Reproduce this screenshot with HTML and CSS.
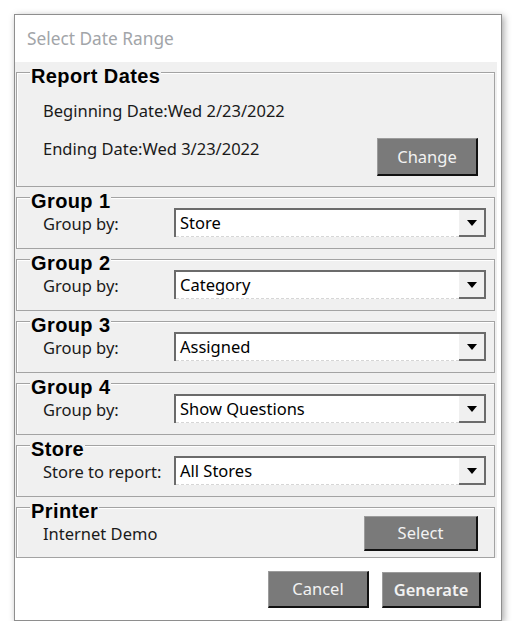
FILE: index.html
```html
<!DOCTYPE html>
<html>
<head>
<meta charset="utf-8">
<title>Select Date Range</title>
<link rel="stylesheet" href="styles.css">
</head>
<body>
<div class="window">
  <div class="titlebar">Select Date Range</div>
  <div class="panel">
    <div class="box box-report">
      <div class="legend">Report Dates</div>
      <div class="date-row">Beginning Date:Wed 2/23/2022</div>
      <div class="date-row date-row-end">
        <span>Ending Date:Wed 3/23/2022</span>
        <button class="btn btn-change">Change</button>
      </div>
    </div>

    <div class="box box-group">
      <div class="legend legend-tight">Group 1</div>
      <div class="field">
        <span class="field-label">Group by:</span>
        <div class="select"><span class="select-value">Store</span><span class="select-arrow"><i class="tri"></i></span></div>
      </div>
    </div>

    <div class="box box-group">
      <div class="legend legend-tight">Group 2</div>
      <div class="field">
        <span class="field-label">Group by:</span>
        <div class="select"><span class="select-value">Category</span><span class="select-arrow"><i class="tri"></i></span></div>
      </div>
    </div>

    <div class="box box-group">
      <div class="legend legend-tight">Group 3</div>
      <div class="field">
        <span class="field-label">Group by:</span>
        <div class="select"><span class="select-value">Assigned</span><span class="select-arrow"><i class="tri"></i></span></div>
      </div>
    </div>

    <div class="box box-group">
      <div class="legend legend-tight">Group 4</div>
      <div class="field">
        <span class="field-label">Group by:</span>
        <div class="select"><span class="select-value">Show Questions</span><span class="select-arrow"><i class="tri"></i></span></div>
      </div>
    </div>

    <div class="box box-group">
      <div class="legend legend-tight">Store</div>
      <div class="field">
        <span class="field-label">Store to report:</span>
        <div class="select"><span class="select-value">All Stores</span><span class="select-arrow"><i class="tri"></i></span></div>
      </div>
    </div>

    <div class="box box-printer">
      <div class="legend legend-printer">Printer</div>
      <div class="printer-row">
        <span>Internet Demo</span>
        <button class="btn btn-select">Select</button>
      </div>
    </div>
  </div>
  <div class="footer">
    <button class="btn btn-cancel">Cancel</button>
    <button class="btn btn-generate">Generate</button>
  </div>
</div>
</body>
</html>
```

FILE: styles.css
```css
* { box-sizing: border-box; }

html, body {
  margin: 0;
  padding: 0;
  background: #ffffff;
}

body {
  font-family: "Noto Sans", "Open Sans", sans-serif;
  font-size: 16.5px;
  color: #1a1a1a;
}

.window {
  margin: 14px 0 0 14px;
  width: 488px;
  height: 607px;
  border: 1px solid #8e8e8e;
  background: #ffffff;
  box-shadow: 2px 2px 7px rgba(0, 0, 0, 0.35);
  display: flex;
  flex-direction: column;
}

.titlebar {
  height: 47px;
  padding-left: 12px;
  display: flex;
  align-items: center;
  color: #a2a5a9;
  font-size: 17.3px;
  line-height: 22px;
}

.panel {
  width: 482px;
  height: 496px;
  background: #f0f0f0;
  padding: 10px 2px 0 1px;
  display: flex;
  flex-direction: column;
  gap: 10px;
}

.box {
  border: 1px solid #a3a3a3;
  box-shadow: inset 1px 1px 0 #ffffff;
  display: flex;
  flex-direction: column;
}

.legend {
  align-self: flex-start;
  font-family: "Liberation Sans", Arial, sans-serif;
  font-weight: bold;
  font-size: 20px;
  line-height: 20px;
  letter-spacing: 0.4px;
  color: #000;
  background: #f0f0f0;
  margin-top: -7px;
  margin-left: -13px;
  padding: 0 1px;
}

.box-report {
  height: 115px;
  padding: 0 16px 0 26px;
}

.date-row {
  line-height: 22px;
  margin-top: 14px;
}

.date-row-end {
  margin-top: 16px;
  display: flex;
  justify-content: space-between;
  align-items: flex-start;
}

.box-group {
  height: 52px;
  padding: 0 8px 0 26px;
}

.legend-tight {
  margin-bottom: -3px;
}

.field {
  display: flex;
  align-items: center;
  height: 29px;
}

.field-label {
  width: 131px;
  flex: none;
  line-height: 22px;
  padding-top: 2px;
}

.select {
  flex: 1;
  height: 29px;
  display: flex;
  background: #ffffff;
  border-top: 2px solid #6b6b6b;
  border-left: 2px solid #6b6b6b;
}

.select-value {
  flex: 1;
  padding: 2px 0 0 4px;
  line-height: 22px;
  color: #000;
  border-bottom: 1px dashed #d6d6d6;
}

.select-arrow {
  width: 27px;
  flex: none;
  background: #f0f0f0;
  border-right: 2px solid #6b6b6b;
  border-bottom: 2px solid #6b6b6b;
  display: flex;
  align-items: center;
  justify-content: center;
  padding-left: 1px;
}

.tri {
  display: block;
  width: 0;
  height: 0;
  border-left: 5px solid transparent;
  border-right: 5px solid transparent;
  border-top: 6px solid #000;
}

.box-printer {
  height: 51px;
  padding: 0 16px 0 26px;
}

.legend-printer {
  margin-bottom: -5px;
}

.printer-row {
  display: flex;
  justify-content: space-between;
  align-items: center;
  height: 35px;
}

.printer-row span {
  line-height: 22px;
}

.btn {
  font-family: "Noto Sans", "Open Sans", sans-serif;
  font-size: 16.5px;
  line-height: 20px;
  color: #f2f2f2;
  background: #7a7a7a;
  border-top: 1px solid #9c9c9c;
  border-left: 1px solid #9c9c9c;
  border-right: 2px solid #111111;
  border-bottom: 2px solid #111111;
  padding: 0;
  margin: 0;
  display: flex;
  align-items: center;
  justify-content: center;
}

.btn-change {
  width: 101px;
  height: 38px;
}

.btn-select {
  width: 114px;
  height: 35px;
}

.footer {
  flex: 1;
  display: flex;
  justify-content: flex-end;
  align-items: flex-start;
  gap: 13px;
  padding: 13px 20px 0 0;
}

.btn-cancel {
  width: 101px;
  height: 37px;
}

.btn-generate {
  width: 99px;
  height: 36px;
  font-weight: 600;
  margin-top: 1px;
}
```
